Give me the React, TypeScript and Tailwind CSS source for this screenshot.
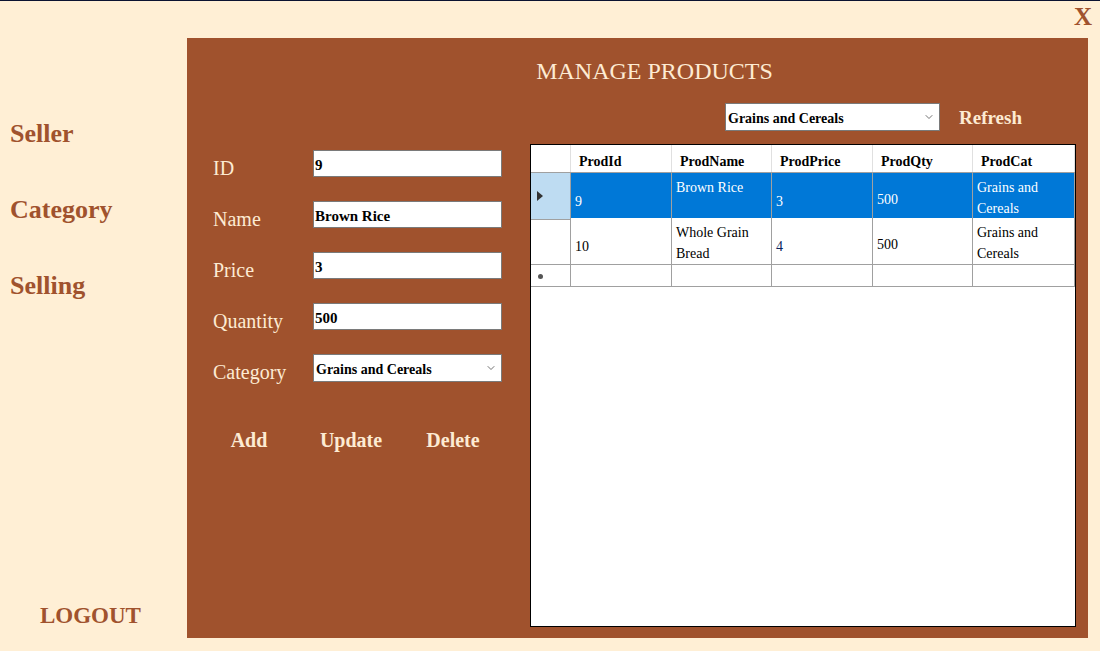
import { ChevronDown } from "lucide-react";

type Product = { id: number; name: string; price: number; qty: number; cat: string };

const products: Product[] = [
  { id: 9, name: "Brown Rice", price: 3, qty: 500, cat: "Grains and Cereals" },
  { id: 10, name: "Whole Grain Bread", price: 4, qty: 500, cat: "Grains and Cereals" },
];

const cols = ["ProdId", "ProdName", "ProdPrice", "ProdQty", "ProdCat"];
const gridCols = "grid grid-cols-[40px_101px_100px_101px_100px_102px]";

function Field({ label, value }: { label: string; value: string }) {
  return (
    <div className="flex items-center h-[27px]">
      <span className="w-[100px] pt-[8px] text-[20px] text-[#fdebd3]">{label}</span>
      <div className="w-[189px] h-[27px] bg-white border border-[#7a7a7a] flex items-center pt-[4px] px-[1px] text-[15px] font-bold text-black">
        {value}
      </div>
    </div>
  );
}

function Combo({ value, w }: { value: string; w: string }) {
  return (
    <div className={`${w} h-[28px] bg-white border border-[#7a7a7a] flex items-center justify-between pl-[2px] pr-[4px] text-[14px] font-bold text-black`}>
      <span className="pt-[2px]">{value}</span>
      <ChevronDown size={12} strokeWidth={1.5} className="text-[#444]" />
    </div>
  );
}

export default function App() {
  return (
    <div
      className="w-[1100px] h-[651px] bg-[#ffefd5] border-t border-[#0b1230] flex overflow-hidden"
      style={{ fontFamily: '"Liberation Serif", serif' }}
    >
      {/* sidebar */}
      <aside className="w-[187px] flex flex-col text-[#a0522d] font-bold">
        <div className="pl-[10px] pt-[118px] flex flex-col gap-[46px] text-[26px] leading-[30px]">
          <span>Seller</span>
          <span>Category</span>
          <span>Selling</span>
        </div>
        <div className="mt-auto mb-[22px] pl-[40px] text-[23px] leading-[26px]">LOGOUT</div>
      </aside>

      {/* main */}
      <div className="flex-1 flex flex-col">
        <div className="h-[37px] flex justify-end items-start pr-[8px] pt-[2px]">
          <span className="text-[#a0522d] font-bold text-[25px] leading-[28px]">X</span>
        </div>
        <div className="w-[901px] h-[600px] bg-[#a0522d] flex flex-col">
          <div className="h-[65px] pt-[20px] pl-[34px] text-center text-[24px] leading-[26px] text-[#fdebd3]">
            MANAGE PRODUCTS
          </div>
          <div className="flex flex-1">
            {/* form */}
            <div className="w-[343px] flex flex-col">
              <div className="pl-[26px] pt-[47px] flex flex-col gap-[24px]">
                <Field label="ID" value="9" />
                <Field label="Name" value="Brown Rice" />
                <Field label="Price" value="3" />
                <Field label="Quantity" value="500" />
                <div className="flex items-center h-[28px]">
                  <span className="w-[100px] pt-[8px] text-[20px] text-[#fdebd3]">Category</span>
                  <Combo value="Grains and Cereals" w="w-[189px]" />
                </div>
              </div>
              <div className="flex ml-[11px] mt-[43px] text-[20px] font-bold text-[#fdebd3]">
                <span className="w-[102px] text-center">Add</span>
                <span className="w-[102px] text-center">Update</span>
                <span className="w-[102px] text-center">Delete</span>
              </div>
            </div>

            {/* list */}
            <div className="flex flex-col">
              <div className="flex items-center h-[28px] pl-[195px] gap-[19px]">
                <Combo value="Grains and Cereals" w="w-[215px]" />
                <span className="text-[19px] font-bold text-[#fdebd3] pt-[2px]">Refresh</span>
              </div>
              <div className="mt-[13px] w-[546px] h-[483px] bg-white border border-black text-[14px] text-black">
                <div className={`${gridCols} h-[28px] border-b border-[#a0a0a0] font-bold`}>
                  <div className="border-r border-[#e0e0e0]" />
                  {cols.map((c) => (
                    <div key={c} className="border-r border-[#e0e0e0] flex items-center pl-[8px] pt-[5px]">
                      {c}
                    </div>
                  ))}
                </div>
                {products.map((p, i) => {
                  const sel = i === 0;
                  const cell = `border-r border-b border-[#a0a0a0] pl-[4px] ${sel ? "bg-[#0078d7] text-white" : "bg-white"}`;
                  return (
                    <div key={p.id} className={`${gridCols} h-[45px] leading-[21px]`}>
                      <div className={`border-r border-b border-[#a0a0a0] flex items-center pl-[6px] ${sel ? "bg-[#bedcf2]" : ""}`}>
                        {sel && (
                          <svg width="6" height="10" viewBox="0 0 6 10">
                            <path d="M0 0 L6 5 L0 10 Z" fill="#333" />
                          </svg>
                        )}
                      </div>
                      <div className={`${cell} flex items-center pt-[10px]`}>{p.id}</div>
                      <div className={`${cell} pt-[4px]`}>{p.name}</div>
                      <div className={`${cell} flex items-center pt-[10px] ${sel ? "" : "text-[#0a1f5c]"}`}>{p.price}</div>
                      <div className={`${cell} flex items-center pt-[6px]`}>{p.qty}</div>
                      <div className={`${cell} pt-[4px]`}>{p.cat}</div>
                    </div>
                  );
                })}
                <div className={`${gridCols} h-[24px]`}>
                  <div className="border-r border-b border-[#a0a0a0] flex items-center pl-[7px] pt-[4px]">
                    <span className="w-[5px] h-[5px] rounded-full bg-[#555]" />
                  </div>
                  {cols.map((c) => (
                    <div key={c} className="border-r border-b border-[#a0a0a0]" />
                  ))}
                </div>
              </div>
            </div>
          </div>
        </div>
      </div>
    </div>
  );
}
